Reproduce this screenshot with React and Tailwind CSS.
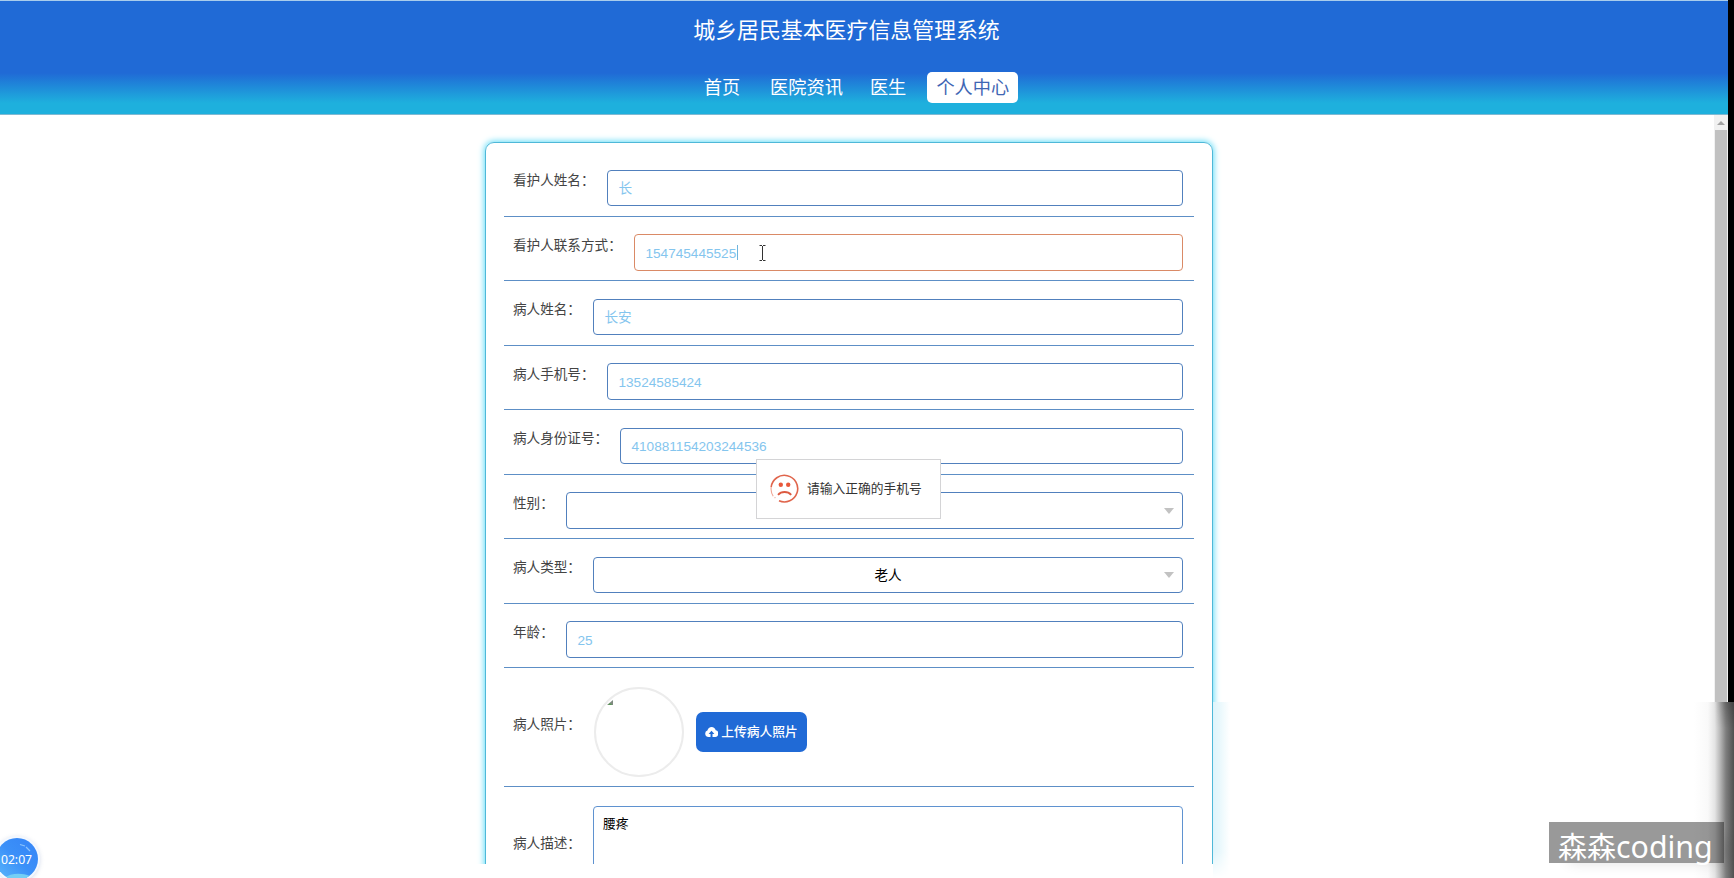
import React from "react";

function Label({ text, className }) {
  return (
    <span className={`shrink-0 whitespace-nowrap text-[13.6px] leading-[20px] text-[#444] ${className}`}>{text}</span>
  );
}

function Row({ label, tall = false, children }) {
  return (
    <div className={`flex border-b border-[#5d8fc6] pl-[9px] pr-[11px] ${tall ? "h-[119px] items-start pt-[18px]" : "h-[64.5px] items-start pt-[17.7px]"}`}>
      <Label text={label} className={tall ? "mt-[29px]" : "mt-[1.5px]"} />
      {children}
    </div>
  );
}

function Field({ value, width, focused = false }) {
  return (
    <div className={`ml-auto flex h-[36.5px] shrink-0 items-center rounded-[4px] border pl-[10.5px] text-[13.6px] text-[#84c5ee] ${focused ? "border-[#da8a66]" : "border-[#5180bd]"} ${width}`}>
      <span className="mt-[2px] leading-[20px]">{value}</span>
      {focused && <span className="ml-px h-[15px] w-px bg-[#6fb4dd]" />}
      {focused && (
        <svg className="ml-[20px]" width="9" height="16" viewBox="0 0 9 16" fill="none" stroke="#333" strokeWidth="1">
          <path d="M1.500 .5H4M5 .5h2.500M4.500 1v14M1.500 15.500H4M5 15.500h2.500" />
        </svg>
      )}
    </div>
  );
}

function Select({ value, width }) {
  return (
    <div className={`ml-auto flex h-[36.5px] shrink-0 items-center rounded-[4px] border border-[#5180bd] pr-[8px] text-[13.6px] text-black ${width}`}>
      <span className="mt-[2px] flex-1 pl-[18px] text-center leading-[20px]">{value}</span>
      <svg width="10" height="6" viewBox="0 0 10 6" fill="#c2c2c2"><path d="M0 0h10L5 6z" /></svg>
    </div>
  );
}

function Header() {
  return (
    <header className="flex h-[115px] shrink-0 flex-col items-center border-b border-t border-b-[#7fb9d2] border-t-[#a9cdec] bg-[linear-gradient(to_bottom,#206ad6_0px,#206ad6_72px,#1eb0dd_102px,#1eb0dd_114px)]">
      <h1 className="mt-[14px] pr-[35px] text-[21.9px] leading-[32px] text-white">城乡居民基本医疗信息管理系统</h1>
      <nav className="mt-[25px] flex h-[31px] items-center pr-[6px] text-[18.2px] leading-[31px] text-white">
        <a className="mt-[2px]">首页</a>
        <a className="ml-[30px] mt-[2px]">医院资讯</a>
        <a className="ml-[27px] mt-[2px]">医生</a>
        <a className="ml-[21px] flex h-[31px] w-[91px] justify-center rounded-[5px] bg-white leading-[32px] text-[#3f66b4]">个人中心</a>
      </nav>
    </header>
  );
}

function Popup() {
  return (
    <div className="absolute left-[756px] top-[459px] flex h-[60px] w-[185px] items-center border border-[#d4d4d6] bg-white pl-[13px] text-[12.75px] text-[#333]">
      <svg className="mt-[-2px]" width="29" height="29" viewBox="0 0 29 29" fill="none">
        <path d="M3.2 22.2A13.2 13.2 0 0 1 1.2 13" stroke="#f0a796" strokeWidth="1.1" />
        <path d="M1.2 13A13.3 13.3 0 1 1 9 26.8" stroke="#e0654c" strokeWidth="1.6" />
        <path d="M4.6 23.3L5.4 24" stroke="#f0b3a6" strokeWidth="1.2" />
        <circle cx="10.8" cy="10.8" r="2.2" fill="#e9583b" />
        <circle cx="18.2" cy="10.8" r="2.2" fill="#e9583b" />
        <path d="M8 20.8c3.4-3.7 9.8-3.7 13.2 0" stroke="#dc5a41" strokeWidth="1.9" />
      </svg>
      <span className="ml-[8px] whitespace-nowrap leading-[20px]">请输入正确的手机号</span>
    </div>
  );
}

function Timer() {
  return (
    <div className="absolute left-[-6px] top-[836px] h-[46px] w-[46px] rounded-full bg-[#f3f8ff] p-[2px] shadow-[0_1px_4px_rgba(90,120,180,0.25)]">
      <div className="relative flex h-[42px] w-[42px] items-center justify-center overflow-hidden rounded-full bg-[linear-gradient(45deg,#58b5fb_5%,#3b90f8_50%,#3584f7_100%)] pr-[1px]">
        <svg className="absolute inset-0" width="42" height="42" viewBox="0 0 42 42" fill="none">
          <path d="M5 42c8-7 19-8 29-4v4z" fill="#75cff5" />
          <path d="M24 6.5l5 1.5M30 9l4 4" stroke="#8cc3fc" strokeWidth="1.2" />
        </svg>
        <span className="relative mt-[2px] font-['Noto_Sans'] text-[12.2px] leading-[16px] text-white">02:07</span>
      </div>
    </div>
  );
}

export default function App() {
  return (
    <div lang="zh-CN" className="relative flex h-[878px] w-[1734px] overflow-hidden bg-white font-['Liberation_Sans','Noto_Sans_CJK_SC',sans-serif]">
      <div className="flex w-[1728px] flex-col">
        <Header />
        <div className="flex h-[749px]">
          <main className="flex h-full w-[1714px] justify-center overflow-hidden pr-[16px] pt-[27px]">
            <section className="h-[900px] w-[728px] shrink-0 rounded-[9px] border border-[#4fb8d8] px-[18px] pt-[9.3px] shadow-[0_0_6px_1px_#62dcf7]">
              <Row label="看护人姓名："><Field value="长" width="w-[576px]" /></Row>
              <Row label="看护人联系方式："><Field value="154745445525" width="w-[549px]" focused /></Row>
              <Row label="病人姓名："><Field value="长安" width="w-[590px]" /></Row>
              <Row label="病人手机号："><Field value="13524585424" width="w-[576px]" /></Row>
              <Row label="病人身份证号："><Field value="410881154203244536" width="w-[563px]" /></Row>
              <Row label="性别："><Select value="" width="w-[617px]" /></Row>
              <Row label="病人类型："><Select value="老人" width="w-[590px]" /></Row>
              <Row label="年龄："><Field value="25" width="w-[617px]" /></Row>
              <Row label="病人照片：" tall>
                <div className="ml-auto flex w-[590px] items-center">
                  <div className="ml-px mt-[1px] h-[90px] w-[90px] rounded-full border-2 border-[#ececec] pl-[11px] pt-[11px]">
                    <svg width="7" height="5" viewBox="0 0 7 5"><path d="M0 5L6 0v5z" fill="#7f8a80" /><path d="M1 5l2-2 2 2z" fill="#5b9b58" /></svg>
                  </div>
                  <button className="ml-[12px] mt-[1px] flex h-[40px] w-[111px] items-center justify-center gap-[3px] rounded-[7px] bg-[#206ad6] text-[12.75px] font-medium text-white">
                    <svg width="13" height="10" viewBox="0 0 13 10" fill="white">
                      <path fillRule="evenodd" d="M3.5 10A3.3 3.3 0 0 1 2.4 3.6C3 1.4 4.600 0 6.600 0s3.700 1.300 4.100 3.300A3.400 3.400 0 0 1 9.700 10H7.500V7h1.900L6.500 3.800 3.600 7h1.900v3z" />
                    </svg>
                    <span className="leading-[20px]">上传病人照片</span>
                  </button>
                </div>
              </Row>
              <div className="flex pl-[9px] pr-[11px] pt-[18.5px]">
                <Label text="病人描述：" className="mt-[28px]" />
                <div className="ml-auto h-[120px] w-[590px] rounded-[4px] border border-[#5f92d0] pl-[9px] pt-[7px] text-[12.75px] leading-[20px] text-black">腰疼</div>
              </div>
            </section>
          </main>
          <div className="flex w-[14px] flex-col items-center bg-[#f1f1f1]">
            <svg className="mt-[6px]" width="8" height="4" viewBox="0 0 8 4" fill="#a3a3a3"><path d="M4 0l4 4H0z" /></svg>
            <div className="mt-[5px] w-[12px] flex-1 bg-[#c1c1c1]" />
          </div>
        </div>
      </div>
      <div className="w-[6px] bg-black" />

      <div className="absolute left-[1213px] top-[702px] h-[176px] w-[521px] bg-white">
        <div className="h-[176px] w-[17px] bg-[linear-gradient(to_right,#dff4fb,#e9f8fc_40%,#fff)] [mask-image:linear-gradient(to_bottom,black_85%,transparent)]" />
        <div className="absolute right-0 top-0 h-full w-[40px] bg-[linear-gradient(to_right,#fff_0%,#f9f9f9_35%,#e4e4e4_52%,#bcbcbc_64%,#7d7d7d_80%,#505050_100%)]" />
        <div className="absolute right-0 top-0 h-[26px] w-[20px] bg-[linear-gradient(to_right,transparent,#3a3a3a)] opacity-60 [mask-image:linear-gradient(to_bottom,black,transparent)]" />
      </div>
      <div className="absolute left-[1549px] top-[822px] flex h-[41px] w-[175px] items-center bg-black/40 pl-[9px] shadow-[12px_8px_14px_-8px_rgba(0,0,0,0.12)]">
        <span className="mt-[9px] whitespace-nowrap font-['Noto_Sans','Noto_Sans_CJK_SC',sans-serif] text-[29px] leading-[36px] text-white">森森<span className="text-[30.3px]">coding</span></span>
      </div>
      <Popup />
      <Timer />
    </div>
  );
}
